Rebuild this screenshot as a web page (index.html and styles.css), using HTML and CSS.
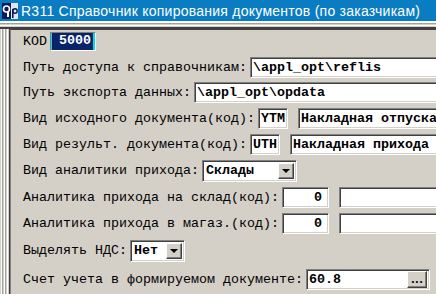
FILE: index.html
```html
<!DOCTYPE html>
<html lang="ru">
<head>
  <meta charset="UTF-8" />
  <title>R311 Справочник копирования документов</title>
  <link rel="stylesheet" href="styles.css">
</head>
<body>

  <!-- Заголовок окна -->
  <div class="titlebar">
    <svg class="app-icon" width="16" height="16" viewBox="0 0 16 16">
      <rect x="0" y="0" width="16" height="16" fill="#dfe6f2"/>
      <rect x="0" y="0" width="9" height="16" fill="#0c1a5a"/>
      <circle cx="4.5" cy="6" r="3" fill="none" stroke="#fff" stroke-width="1.6"/>
      <rect x="5" y="9" width="2" height="5" fill="#fff"/>
      <rect x="10" y="6" width="1.6" height="9" fill="#0c1a5a"/>
      <circle cx="13" cy="8" r="2.2" fill="none" stroke="#0c1a5a" stroke-width="1.4"/>
    </svg>
    <span>R311 Справочник копирования документов (по заказчикам)</span>
  </div>
  <div class="frame-top"></div>

  <div class="client">
    <div class="frame-left"></div>

    <!-- Панель параметров -->
    <div class="panel">
      <div class="row row-kod">
        <span class="label">KOD</span>
        <span class="kod-field">5000</span>
      </div>

      <div class="row">
        <span class="label">Путь доступа к справочникам:</span>
        <span class="edit edit-long">\appl_opt\reflis</span>
      </div>

      <div class="row">
        <span class="label">Путь экспорта данных:</span>
        <span class="edit edit-long">\appl_opt\opdata</span>
      </div>

      <div class="row row-md">
        <span class="label">Вид исходного документа(код):</span>
        <span class="edit edit-code">YTM</span>
        <span class="edit edit-name">Накладная отпуска</span>
      </div>

      <div class="row row-md">
        <span class="label">Вид результ. документа(код):</span>
        <span class="edit edit-code">UTH</span>
        <span class="edit edit-name">Накладная прихода</span>
      </div>

      <div class="row row-lg">
        <span class="label">Вид аналитики прихода:</span>
        <span class="combo combo-sklad">
          <span class="combo-text">Склады</span>
          <span class="combo-btn"><i class="arrow"></i></span>
        </span>
      </div>

      <div class="row row-lg">
        <span class="label">Аналитика прихода на склад(код):</span>
        <span class="edit edit-num">0</span>
        <span class="edit edit-name"></span>
      </div>

      <div class="row">
        <span class="label">Аналитика прихода в магаз.(код):</span>
        <span class="edit edit-num">0</span>
        <span class="edit edit-name"></span>
      </div>

      <div class="row row-xl">
        <span class="label">Выделять НДС:</span>
        <span class="combo combo-nds">
          <span class="combo-text">Нет</span>
          <span class="combo-btn"><i class="arrow"></i></span>
        </span>
      </div>

      <div class="row row-xl">
        <span class="label">Счет учета в формируемом документе:</span>
        <span class="edit edit-schet">
          <span class="combo-text">60.8</span>
          <span class="dots-btn">...</span>
        </span>
      </div>
    </div>
  </div>

</body>
</html>
```

FILE: styles.css
```css
body {
  margin: 0;
  width: 436px;
  height: 294px;
  overflow: hidden;
  background-color: #d4d0c8;
  font-family: "Liberation Mono", "Courier New", monospace;
  font-size: 13.33px;
  color: #000;
}

.titlebar {
  height: 21px;
  background-color: #0a7dc2;
  color: white;
  display: flex;
  align-items: center;
  font-family: "Liberation Sans", Arial, sans-serif;
  font-size: 14px;
  letter-spacing: 0.25px;
  white-space: nowrap;
}

.titlebar .app-icon {
  margin: 0 3px 0 2px;
  flex: none;
}

.frame-top {
  height: 8px;
  background: linear-gradient(to bottom,
    #ffffff 0 2px, #a0a0a0 2px 3px, #d4d0c8 3px 4px,
    #ffffff 4px 5px, #d4d0c8 5px 6px, #404040 6px 8px);
}

.client {
  display: flex;
  height: 265px;
}

.frame-left {
  width: 10px;
  flex: none;
  background: linear-gradient(to right,
    #d4d0c8 0 1px, #ffffff 1px 2px, #a0a0a0 2px 3px, #d4d0c8 3px 4px,
    #ffffff 4px 5px, #a0a0a0 5px 6px, #d4d0c8 6px 7px,
    #ffffff 7px 8px, #d4d0c8 8px 9px, #404040 9px 10px);
}

.panel {
  flex: 1;
  overflow: hidden;
  border-top: 1px solid #404040;
  border-left: 1px solid #808080;
  padding: 1px 0 0 12px;
  white-space: nowrap;
}

.row {
  display: flex;
  align-items: center;
  height: 25px;
}

.row-kod {
  height: 20px;
  margin-bottom: 4px;
}

.row-md {
  height: 26px;
}

.row-lg {
  height: 27px;
}

.row-xl {
  height: 29px;
}

.label {
  flex: none;
  margin-right: 3px;
}

/* Поле ввода в стиле Windows */
.edit {
  flex: none;
  box-sizing: border-box;
  height: 21px;
  display: flex;
  align-items: center;
  padding: 0 2px;
  background-color: white;
  border: 1px solid;
  border-color: #808080 #ffffff #ffffff #808080;
  box-shadow: inset 1px 1px 0 #404040, inset -1px -1px 0 #d4d0c8;
  font-weight: bold;
}

.edit-long {
  width: 260px;
}

.edit-code {
  width: 30px;
  margin-right: 10px;
}

.edit-name {
  width: 160px;
}

.edit-num {
  width: 47px;
  justify-content: flex-end;
  padding-right: 6px;
  margin-right: 10px;
}

.edit-schet {
  width: 124px;
  justify-content: space-between;
  padding-right: 2px;
}

.kod-field {
  box-sizing: border-box;
  width: 46px;
  height: 19px;
  background-color: #0a246a;
  color: white;
  font-weight: bold;
  text-align: right;
  padding-right: 4px;
  line-height: 16px;
  border: 1px solid;
  border-color: #808080 #ffffff #ffffff #808080;
  box-shadow: inset 1px 0 0 #00e0e0, inset -2px 0 0 #00e0e0;
}

.combo {
  flex: none;
  box-sizing: border-box;
  height: 22px;
  display: flex;
  align-items: center;
  justify-content: space-between;
  padding: 0 2px 0 3px;
  background-color: white;
  border: 1px solid;
  border-color: #808080 #ffffff #ffffff #808080;
  box-shadow: inset 1px 1px 0 #404040, inset -1px -1px 0 #d4d0c8;
  font-weight: bold;
}

.combo-sklad {
  width: 95px;
}

.combo-nds {
  width: 55px;
}

.combo-btn, .dots-btn {
  box-sizing: border-box;
  width: 16px;
  height: 16px;
  background-color: #d4d0c8;
  border: 1px solid;
  border-color: #ffffff #404040 #404040 #ffffff;
  box-shadow: inset -1px -1px 0 #808080;
  display: flex;
  align-items: center;
  justify-content: center;
}

.arrow {
  width: 0;
  height: 0;
  border-left: 4px solid transparent;
  border-right: 4px solid transparent;
  border-top: 4px solid #000;
}

.dots-btn {
  width: 20px;
  height: 17px;
  font-size: 12px;
  letter-spacing: -3px;
  padding-right: 3px;
  line-height: 12px;
}
```
